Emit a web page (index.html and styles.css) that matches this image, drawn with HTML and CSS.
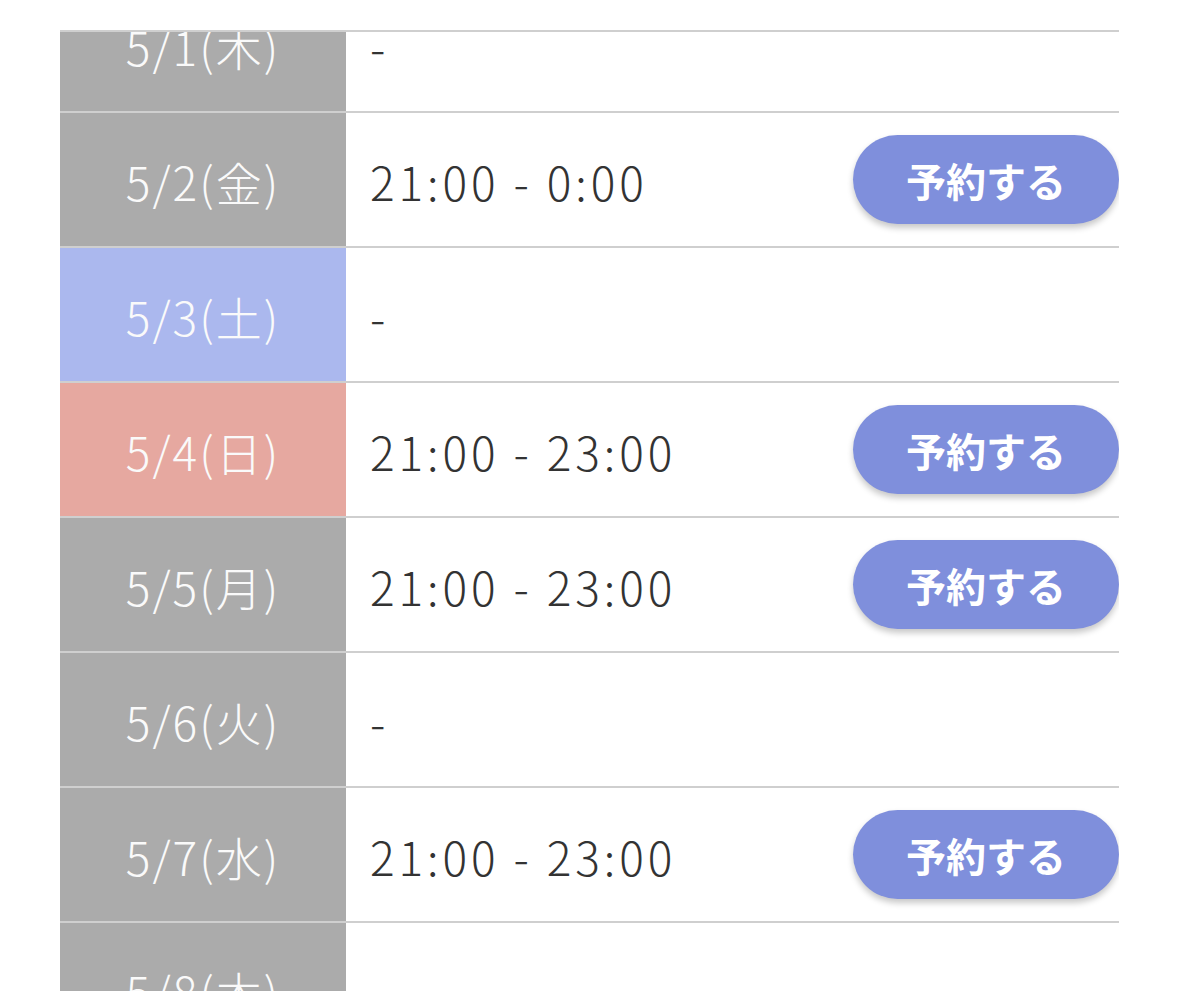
FILE: index.html
```html
<!DOCTYPE html>
<html lang="ja">
<head>
<meta charset="utf-8">
<title>予約</title>
<link rel="stylesheet" href="styles.css">
</head>
<body>
<div class="viewport">
  <div class="schedule">
    <div class="row">
      <div class="date weekday">5/1(木)</div>
      <div class="slot"><span class="time">-</span></div>
    </div>
    <div class="row">
      <div class="date weekday">5/2(金)</div>
      <div class="slot"><span class="time">21:00 - 0:00</span><button class="reserve">予約する</button></div>
    </div>
    <div class="row">
      <div class="date saturday">5/3(土)</div>
      <div class="slot"><span class="time">-</span></div>
    </div>
    <div class="row">
      <div class="date sunday">5/4(日)</div>
      <div class="slot"><span class="time">21:00 - 23:00</span><button class="reserve">予約する</button></div>
    </div>
    <div class="row">
      <div class="date weekday">5/5(月)</div>
      <div class="slot"><span class="time">21:00 - 23:00</span><button class="reserve">予約する</button></div>
    </div>
    <div class="row">
      <div class="date weekday">5/6(火)</div>
      <div class="slot"><span class="time">-</span></div>
    </div>
    <div class="row">
      <div class="date weekday">5/7(水)</div>
      <div class="slot"><span class="time">21:00 - 23:00</span><button class="reserve">予約する</button></div>
    </div>
    <div class="row">
      <div class="date weekday">5/8(木)</div>
      <div class="slot"><span class="time">-</span></div>
    </div>
  </div>
</div>
</body>
</html>
```
FILE: styles.css
```css
html, body {
  margin: 0;
  padding: 0;
  background: #ffffff;
  height: 100%;
  overflow: hidden;
}
body {
  font-family: "Noto Sans CJK JP", "Noto Sans", sans-serif;
}
.viewport {
  margin: 30px 60px 0;
  border-top: 2px solid #cfcfcf;
  height: 959px;
  overflow: hidden;
}
.schedule {
  display: flex;
  flex-direction: column;
  margin-top: -54px;
}
.row {
  display: grid;
  grid-template-columns: 286px 1fr;
  height: 133px;
  border-bottom: 2px solid #cfcfcf;
}
.date {
  display: flex;
  align-items: center;
  justify-content: center;
  color: #fafafa;
  font-size: 46px;
  font-weight: 300;
  letter-spacing: 2px;
  padding-top: 2px;
}
.weekday { background: #ababab; }
.saturday { background: #abb8ee; }
.sunday { background: #e6a8a0; }
.slot {
  display: flex;
  align-items: center;
  justify-content: space-between;
  padding-left: 24px;
  background: #ffffff;
}
.time {
  color: #333333;
  font-size: 46px;
  font-weight: 300;
  letter-spacing: 3.9px;
  padding-top: 2px;
}
.reserve {
  width: 266px;
  height: 89px;
  border: none;
  border-radius: 45px;
  background: #7f8fdc;
  color: #ffffff;
  font-family: "Noto Sans CJK JP", sans-serif;
  font-weight: 700;
  font-size: 40px;
  box-shadow: 0 4px 6px rgba(0, 0, 0, 0.22);
  padding: 0;
}
```
